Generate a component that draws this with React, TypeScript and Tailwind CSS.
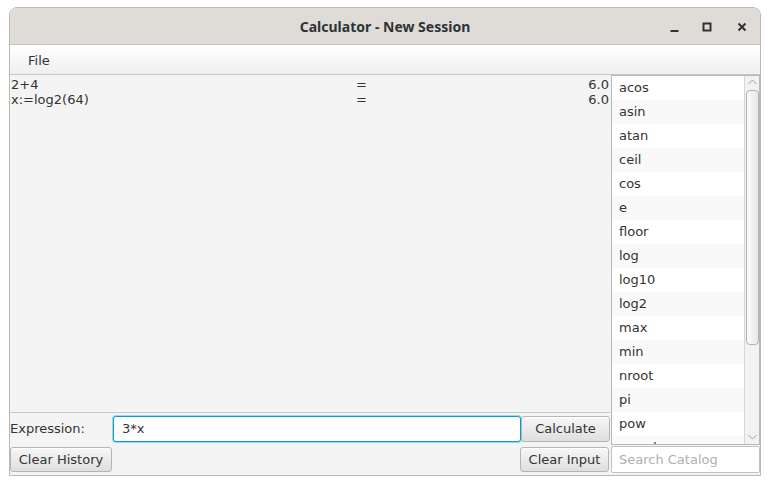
import React from 'react';

const catalog = [
  'acos', 'asin', 'atan', 'ceil', 'cos', 'e', 'floor', 'log', 'log10', 'log2',
  'max', 'min', 'nroot', 'pi', 'pow', 'round',
];

const history = [
  { expr: '2+4', result: '6.0' },
  { expr: 'x:=log2(64)', result: '6.0' },
];

function FxButton({ label, className = '' }: { label: string; className?: string }) {
  return (
    <button
      className={`flex items-center justify-center rounded-[3px] border border-[#b5b5b5] bg-gradient-to-b from-[#f7f7f7] to-[#dedede] text-[13px] text-[#333] shadow-[inset_0_1px_0_#fff] ${className}`}
    >
      {label}
    </button>
  );
}

function TitleBar() {
  return (
    <div className="relative flex h-[37px] items-center justify-center rounded-t-[8px] border-b border-[#c7c4bf] bg-[#dfdcd8]">
      <span className="text-[14px] font-bold text-[#2e3436] [font-family:'Noto_Sans',sans-serif]">
        Calculator - New Session
      </span>
      <div className="absolute right-0 top-0 flex h-full items-center">
        <svg width="31" height="36" viewBox="0 0 31 36">
          <rect x="11.5" y="22" width="8" height="2" fill="#2e3436" />
        </svg>
        <svg width="34" height="36" viewBox="0 0 34 36">
          <rect x="13.5" y="15.5" width="7" height="7" fill="none" stroke="#2e3436" strokeWidth="2" />
        </svg>
        <svg width="36" height="36" viewBox="0 0 36 36">
          <path d="M14.5 15.5 L21.5 22.5 M21.5 15.5 L14.5 22.5" stroke="#2e3436" strokeWidth="2" />
        </svg>
      </div>
    </div>
  );
}

function CatalogList() {
  return (
    <div className="relative h-[370px] overflow-hidden border border-[#b8b8b8] bg-white">
      <div className="mr-[15px]">
        {catalog.map((name, i) => (
          <div
            key={name}
            className={`flex h-[24px] items-center pl-[7px] text-[13px] text-[#333] ${i % 2 === 0 ? 'bg-white' : 'bg-[#f9f9f9]'}`}
          >
            {name}
          </div>
        ))}
      </div>
      {/* scrollbar */}
      <div className="absolute bottom-0 right-0 top-0 flex w-[15px] flex-col items-center border-l border-[#d6d6d6] bg-[#f2f2f2]">
        <svg width="15" height="14" viewBox="0 0 15 14">
          <path d="M3.5 8 L7.5 4 L11.5 8" fill="none" stroke="#a0a0a0" strokeWidth="1" />
        </svg>
        <div className="h-[255px] w-[13px] rounded-[4px] border border-[#b2b2b2] bg-gradient-to-r from-[#fafafa] to-[#e8e8e8]" />
        <div className="flex-1" />
        <svg width="15" height="14" viewBox="0 0 15 14">
          <path d="M3.5 5 L7.5 9 L11.5 5" fill="none" stroke="#a0a0a0" strokeWidth="1" />
        </svg>
      </div>
    </div>
  );
}

export default function App() {
  return (
    <div className="h-[484px] w-[770px] bg-white pl-[9px] pt-[7px] [font-family:'DejaVu_Sans',sans-serif]">
      <div className="flex h-[469px] w-[752px] flex-col rounded-t-[8px] border border-[#bcb9b4] bg-[#f4f4f4]">
        <TitleBar />
        {/* menu bar */}
        <div className="flex h-[30px] items-center border-b border-[#c6c6c6] bg-gradient-to-b from-white to-[#efefef] pl-[18px] pt-[2px]">
          <span className="text-[13px] text-[#333]">File</span>
        </div>
        <div className="flex flex-1">
          {/* left column */}
          <div className="flex w-[600px] flex-col">
            <div className="h-[338px] border-b border-[#c8c8c8] px-[1px] pt-[2px] text-[13px] leading-[15px] text-[#333]">
              {history.map((h, i) => (
                <div key={i} className="flex">
                  <span className="w-[345px]">{h.expr}</span>
                  <span className="flex-1">=</span>
                  <span>{h.result}</span>
                </div>
              ))}
            </div>
            <div className="mt-[3px] flex h-[26px] items-center">
              <span className="w-[103px] text-[13px] text-[#333]">Expression:</span>
              <div className="flex h-[26px] w-[408px] items-center rounded-[3px] border border-[#039ed3] bg-white pl-[8px] text-[13px] text-[#333] shadow-[0_0_0_1px_#9fd8ee]">
                3*x
              </div>
              <FxButton label="Calculate" className="h-[26px] w-[89px]" />
            </div>
            <div className="mt-[5px] flex h-[25px] justify-between pr-[1px]">
              <FxButton label="Clear History" className="h-[25px] w-[102px]" />
              <FxButton label="Clear Input" className="h-[25px] w-[89px]" />
            </div>
          </div>
          {/* right column */}
          <div className="ml-[1px] flex flex-1 flex-col">
            <CatalogList />
            <div className="mt-[1px] flex h-[27px] items-center rounded-[2px] border border-[#c2c2c2] bg-white pl-[7px] text-[13px] text-[#b0b0b0]">
              Search Catalog
            </div>
          </div>
        </div>
      </div>
    </div>
  );
}
